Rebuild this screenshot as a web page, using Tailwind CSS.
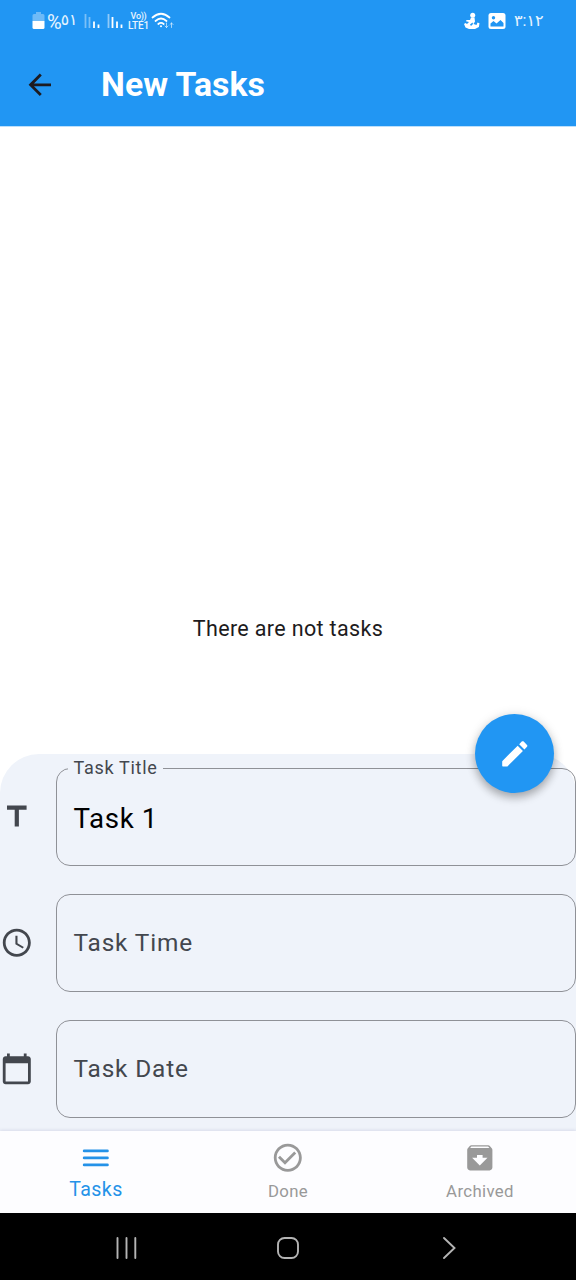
<!DOCTYPE html>
<html lang="en">
<head>
<meta charset="utf-8">
<title>New Tasks</title>
<script src="https://cdn.jsdelivr.net/npm/@tailwindcss/browser@4"></script>
</head>
<body class="w-[576px] h-[1280px] overflow-hidden bg-white font-['Roboto','DejaVu_Sans',sans-serif] flex flex-col">
  <header class="h-[126px] shrink-0 bg-[#2196f3] flex flex-col box-content border-b border-[#90caf9]/60 bg-clip-padding">
    <div class="h-[42px] shrink-0 flex items-center justify-between pl-[32px] pr-[32px] text-white/90">
      <div class="flex items-center">
        <svg class="w-[13px] h-[18px] shrink-0" viewBox="0 0 13 18"><path d="M4 0h5v2h2q1.500 0 1.500 1.500V9H.5V3.500Q.5 2 2 2h2z" fill="#fff" opacity=".35"/><path d="M.5 9h12v6.500q0 1.500-1.500 1.500H2Q.5 17 .5 15.500z" fill="#fff"/></svg>
        <div class="flex items-center w-[31px] ml-[2px] pt-[2px] text-[20px] leading-none" dir="ltr"><span>%</span><span class="text-[15.500px] -ml-px pb-[2px]">٥١</span></div>
        <svg class="w-[16px] h-[18px] ml-[6px] shrink-0" viewBox="0 0 16 18" stroke="#fff" stroke-width="1.800"><path d="M1.500 2v14M5.500 5v11" opacity=".4"/><path d="M10 9.500V16M14.500 12.500V16"/></svg>
        <svg class="w-[16px] h-[18px] ml-[7px] shrink-0" viewBox="0 0 16 18" stroke="#fff" stroke-width="1.800"><path d="M1.500 2v14" opacity=".5"/><path d="M5.500 5v11M10 9.500V16M14.500 12.500V16"/></svg>
        <div class="ml-[4px] w-[23px] flex flex-col items-center text-[9px] leading-[10px] font-medium tracking-[-0.3px] whitespace-nowrap"><span>Vo))</span><span class="text-[10px] tracking-[-0.1px]">LTE1</span></div>
        <svg class="w-[24px] h-[18px] ml-px shrink-0" viewBox="0 0 24 18" fill="none" stroke="#fff" stroke-width="1.700" stroke-linecap="round"><path d="M1.500 5.500q8.500-7.500 17 0M4.500 9q5.500-5 11 0M7.300 12q2.700-2.400 5.400 0"/><circle cx="10" cy="14.300" r="1" fill="#fff" stroke="none"/><path d="M15.500 11v4.500m-1.500-1.500l1.500 1.500 1.500-1.500M20.500 15.500V11m-1.500 1.500l1.500-1.500 1.500 1.500" stroke-width="1" opacity=".6"/></svg>
      </div>
      <div class="flex items-center">
        <svg class="w-[16px] h-[18px] shrink-0" viewBox="0 0 16 18" fill="#fff"><circle cx="8.700" cy="3.300" r="2.500"/><path d="M7 5.500h3.500l.5 4-1.500 2.500 3 1 1-2.500 2 .8-.6 3.700L11 17H5L1.500 15.500 0 12l1.500-1L3 12l2-2-3-.7.500-1.300L6 8z"/><path d="M6 12.500l2.500-2 .5 1.500-2 2z" fill="#2196f3"/></svg>
        <svg class="w-[18px] h-[18px] ml-[8px] shrink-0" viewBox="0 0 18 18"><rect x=".5" y="1" width="17" height="16" rx="2.500" fill="#fff"/><circle cx="5.500" cy="5.700" r="1.700" fill="#2196f3"/><path d="M2.500 14.500v-3l3-2.500 3 2.500 4-3.500 3 3v3.500z" fill="#2196f3"/></svg>
        <div class="ml-[8px] w-[30px] text-[16px] leading-none whitespace-nowrap" dir="ltr"><bdo dir="ltr">٣:١٢</bdo></div>
      </div>
    </div>
    <div class="flex-1 flex items-center pl-[22.500px] pt-[2px]">
      <svg class="w-[33.600px] h-[33.600px] shrink-0" viewBox="0 0 24 24" fill="#1d1b20"><path d="M20 11H7.830l5.590-5.590L12 4l-8 8 8 8 1.410-1.410L7.830 13H20z"/></svg>
      <h1 class="ml-[45px] text-[33.800px] leading-none font-bold text-white whitespace-nowrap">New Tasks</h1>
    </div>
  </header>

  <main class="relative h-[1004px] shrink-0 flex flex-col">
    <div class="h-[627px] flex flex-col justify-end items-center pb-[111px]">
      <p class="text-[21.500px] leading-[28px] tracking-[0.35px] text-[#1d1b20]">There are not tasks</p>
    </div>
    <form class="flex-1 bg-[#eff3fa] rounded-t-[39px] pt-[14px] flex flex-col gap-[28px]">
      <div class="h-[98px] flex items-center">
        <svg class="w-[33.600px] h-[33.600px] shrink-0" viewBox="0 0 24 24" fill="#43474e"><path d="M5 4v3h5.500v12h3V7H19V4z"/></svg>
        <fieldset class="relative ml-[22.400px] flex-1 h-full border-[1.400px] border-[#8f9197] rounded-[14px] flex items-center pl-[16.500px] pt-[4px]">
          <span class="absolute left-[11px] -top-[13px] h-[24px] leading-[24px] pl-[5.500px] pr-[6px] bg-[#eff3fa] text-[18px] tracking-[0.7px] text-[#43474e] whitespace-nowrap">Task Title</span>
          <span class="text-[27.700px] leading-none tracking-[0.6px] text-black">Task 1</span>
        </fieldset>
      </div>
      <div class="h-[98px] flex items-center">
        <svg class="w-[33.600px] h-[33.600px] shrink-0" viewBox="0 0 24 24" fill="#43474e"><path d="M11.990 2C6.470 2 2 6.480 2 12s4.470 10 9.990 10C17.520 22 22 17.520 22 12S17.520 2 11.990 2zM12 20c-4.420 0-8-3.580-8-8s3.580-8 8-8 8 3.580 8 8-3.580 8-8 8zm.5-13H11v6l5.250 3.150.75-1.230-4.500-2.670z"/></svg>
        <fieldset class="ml-[22.400px] flex-1 h-full border-[1.400px] border-[#8f9197] rounded-[14px] flex items-center pl-[16.500px]">
          <span class="text-[24.400px] leading-none tracking-[0.85px] text-[#43474e]">Task Time</span>
        </fieldset>
      </div>
      <div class="h-[98px] flex items-center">
        <svg class="w-[33.600px] h-[33.600px] shrink-0" viewBox="0 0 24 24" fill="#43474e"><path d="M20 3h-1V1h-2v2H7V1H5v2H4c-1.100 0-2 .9-2 2v16c0 1.100.9 2 2 2h16c1.100 0 2-.9 2-2V5c0-1.100-.9-2-2-2zm0 18H4V8h16v13z"/></svg>
        <fieldset class="ml-[22.400px] flex-1 h-full border-[1.400px] border-[#8f9197] rounded-[14px] flex items-center pl-[16.500px]">
          <span class="text-[24.400px] leading-none tracking-[0.85px] text-[#43474e]">Task Date</span>
        </fieldset>
      </div>
    </form>
    <button class="absolute left-[475px] top-[587px] w-[79px] h-[79px] rounded-full bg-[#2196f3] flex items-center justify-center shadow-[0_5px_8px_rgba(0,0,0,0.25),0_1px_12px_rgba(0,0,0,0.12)]" aria-label="Add task">
      <svg class="w-[33.600px] h-[33.600px]" viewBox="0 0 24 24" fill="#fff"><path d="M3 17.460v3.040c0 .28.220.5.5.5h3.040c.13 0 .26-.05.35-.15L17.810 9.940l-3.750-3.750L3.150 17.100c-.1.100-.15.220-.15.360zM20.710 7.040c.39-.39.39-1.020 0-1.410l-2.340-2.340c-.39-.39-1.020-.39-1.410 0l-1.830 1.830 3.750 3.750z"/></svg>
    </button>
  </main>

  <nav class="relative h-[82px] shrink-0 bg-[#fdfdff] grid grid-cols-3 shadow-[0_-1px_3px_rgba(60,60,120,0.12)]">
    <div class="flex flex-col items-center pt-[10px] text-[#2492e8]">
      <svg class="w-[33.600px] h-[33.600px]" viewBox="0 0 24 24" fill="none" stroke="currentColor" stroke-width="2" stroke-linecap="round"><path d="M3.700 7.100h16.600M3.700 12.100h16.600M3.700 17.100h16.600"/></svg>
      <span class="mt-[3px] text-[19.600px] leading-[24px] tracking-[0.4px]">Tasks</span>
    </div>
    <div class="flex flex-col items-center pt-[10px] text-[#999]">
      <svg class="w-[33.600px] h-[33.600px]" viewBox="0 0 24 24" fill="currentColor"><path d="M16.590 7.580L10 14.170l-3.590-3.580L5 12l5 5 8-8zM12 2C6.480 2 2 6.480 2 12s4.480 10 10 10 10-4.480 10-10S17.520 2 12 2zm0 18c-4.420 0-8-3.580-8-8s3.580-8 8-8 8 3.580 8 8-3.580 8-8 8z"/></svg>
      <span class="mt-[4px] text-[16.800px] leading-[24px] tracking-[0.35px]">Done</span>
    </div>
    <div class="flex flex-col items-center pt-[10px] text-[#999]">
      <svg class="w-[33.600px] h-[33.600px]" viewBox="0 0 24 24" fill="currentColor"><path d="M20.540 5.230l-1.390-1.680C18.880 3.210 18.470 3 18 3H6c-.47 0-.88.21-1.160.55L3.460 5.230C3.170 5.570 3 6.020 3 6.500V19c0 1.100.9 2 2 2h14c1.100 0 2-.9 2-2V6.500c0-.48-.17-.93-.46-1.270zM12 17.500L6.500 12H10v-2h4v2h3.500zM5.120 5l.81-1h12l.94 1z"/></svg>
      <span class="mt-[4px] text-[16.800px] leading-[24px] tracking-[0.35px]">Archived</span>
    </div>
  </nav>

  <footer class="h-[67px] shrink-0 bg-black flex items-center pl-[115px] pt-[3px]">
    <svg class="w-[23px] h-[24px]" viewBox="0 0 23 24" stroke="#b4b4b4" stroke-width="1.900" stroke-linecap="round"><path d="M2.500 2v20M11.500 2v20M20.300 2v20"/></svg>
    <svg class="w-[24px] h-[24px] ml-[137.500px]" viewBox="0 0 24 24" fill="none" stroke="#b4b4b4" stroke-width="1.900"><rect x="2" y="2" width="20" height="20" rx="6.500"/></svg>
    <svg class="w-[14px] h-[24px] ml-[142px]" viewBox="0 0 14 24" fill="none" stroke="#b4b4b4" stroke-width="1.900" stroke-linecap="round"><path d="M2 2l10.500 10L2 22"/></svg>
  </footer>
</body>
</html>
